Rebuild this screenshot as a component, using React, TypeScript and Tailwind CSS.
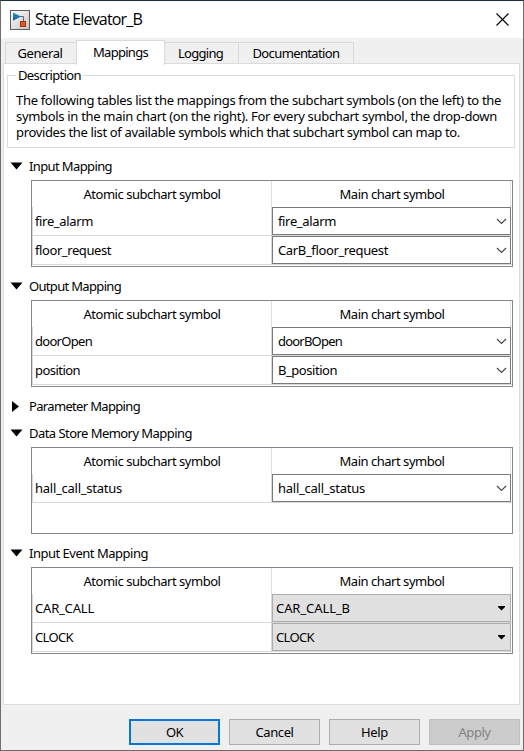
import { useLayoutEffect, useRef } from "react";

/** Single line of text whose tracking is adjusted to fill `w` pixels. */
function Label({ w, children, className = "" }: { w: number; children: string; className?: string }) {
  const ref = useRef<HTMLSpanElement>(null);
  useLayoutEffect(() => {
    const el = ref.current;
    if (!el) return;
    el.style.letterSpacing = "0px";
    const natural = el.getBoundingClientRect().width;
    el.style.letterSpacing = `${(w - natural) / children.length}px`;
  }, [w, children]);
  return (
    <span ref={ref} className={`inline-block self-start whitespace-pre ${className}`}>
      {children}
    </span>
  );
}

type Row = { left: string; lw: number; right: string; rw: number };

function Combo({ text, w, flat }: { text: string; w: number; flat?: boolean }) {
  return (
    <div
      className={`flex h-7 w-[239px] items-center justify-between border ${
        flat ? "border-[#adadad] bg-[#e1e1e1] pr-1 pl-[3px]" : "border-[#7a7a7a] bg-white pr-[3px] pl-[5px]"
      }`}
    >
      <Label w={w} className="mt-[5px]">{text}</Label>
      {flat ? (
        <svg width="9" height="5" viewBox="0 0 9 5">
          <path d="M1 0h7v1L4.5 4.5 1 1z" fill="#000" />
        </svg>
      ) : (
        <svg width="11" height="7" viewBox="0 0 11 7" className="mt-px">
          <path d="M1 1l4.5 4.5L10 1" fill="none" stroke="#444" strokeWidth="1.1" />
        </svg>
      )}
    </div>
  );
}

function MappingTable({ rows, flat }: { rows: Row[]; flat?: boolean }) {
  return (
    <div className="ml-[27px] mt-[3px] h-[87px] w-[482px] border border-[#828790] bg-white">
      <div className="flex h-[26px] w-[479px]">
        <div className="flex w-[240px] justify-center border-r border-[#e0e0e0] pt-[5px] pl-px">
          <Label w={137}>Atomic subchart symbol</Label>
        </div>
        <div className="flex flex-1 justify-center border-r border-[#e5e5e5] pt-[5px] pl-0.5">
          <Label w={105}>Main chart symbol</Label>
        </div>
      </div>
      {rows.map((r) => (
        <div key={r.left} className="flex h-[29px] w-[480px] border-b border-l border-[#d8d8d8]">
          <div className="flex w-[239px] border-r border-[#d8d8d8] pt-1.5 pl-0.5">
            <Label w={r.lw}>{r.left}</Label>
          </div>
          <Combo text={r.right} w={r.rw} flat={flat} />
        </div>
      ))}
    </div>
  );
}

function SectionTitle({ title, w, closed }: { title: string; w: number; closed?: boolean }) {
  return (
    <div className="flex h-5 items-center">
      <div className="flex h-5 w-[25px] items-center pb-[3px] pl-1.5">
        {closed ? (
          <svg width="8" height="11" viewBox="0 0 8 11" className="ml-[2px] mt-0.5">
            <path d="M0 0l7 5.5L0 11z" fill="#000" />
          </svg>
        ) : (
          <svg width="13" height="8" viewBox="0 0 13 8">
            <path d="M0.5 0.5h12L6.5 7.5z" fill="#000" />
          </svg>
        )}
      </div>
      <Label w={w} className="mt-px">{title}</Label>
    </div>
  );
}

function AppIcon() {
  return (
    <svg width="20" height="20" viewBox="0 0 20 20">
      <defs>
        <linearGradient id="face" x1="0" y1="0" x2="1" y2="1">
          <stop offset="0" stopColor="#fff" />
          <stop offset="1" stopColor="#c4c4c4" />
        </linearGradient>
        <linearGradient id="tri" x1="0" y1="0" x2="0" y2="1">
          <stop offset="0" stopColor="#2a93cc" />
          <stop offset="1" stopColor="#1a5f98" />
        </linearGradient>
      </defs>
      <rect x="0.5" y="0.5" width="19" height="19" fill="url(#face)" stroke="#5c5c5c" />
      <path d="M10 6.5h3.5V13" fill="none" stroke="#666" />
      <path d="M3 2.6l8 4-8 4.2z" fill="url(#tri)" />
      <rect x="10.5" y="11.5" width="5" height="5" fill="#e0592a" stroke="#9c3412" />
    </svg>
  );
}

const Button = ({ text, w, kind = "normal" }: { text: string; w: number; kind?: "normal" | "primary" | "disabled" }) => (
  <button
    className={`flex h-[26px] w-[91px] justify-center ${
      kind === "primary"
        ? "border-2 border-[#0078d7] bg-[#e1e1e1] pt-[3px]"
        : kind === "disabled"
          ? "border border-[#bfbfbf] bg-[#cccccc] pt-1 text-[#838383]"
          : "border border-[#adadad] bg-[#e1e1e1] pt-1"
    }`}
  >
    <Label w={w}>{text}</Label>
  </button>
);

export default function App() {
  return (
    <div className="flex h-[751px] w-[524px] flex-col border border-t-[#1d2c40] border-r-[#6d6b6e] border-b-[#6b6b6b] border-l-[#716d6e] bg-[#f0f0f0] font-['Noto_Sans','Open_Sans',sans-serif] text-[13px] leading-4 text-black">
      <header className="flex h-[37px] items-center bg-white pl-[9px]">
        <AppIcon />
        <Label w={107} className="mt-2 ml-[5px] font-['Open_Sans',sans-serif] text-[16px] leading-5">
          State Elevator_B
        </Label>
        <svg width="13" height="13" viewBox="0 0 13 13" className="mr-[14px] mb-px ml-auto">
          <path d="M0.5 0.5l12 12M12.5 0.5l-12 12" stroke="#000" strokeWidth="1.1" />
        </svg>
      </header>

      <nav className="mt-0.5 flex h-6 items-end pl-1">
        <div className="flex h-[22px] w-[71px] justify-center border border-r-0 border-b-0 border-[#d9d9d9] pt-[2px] pr-0.5">
          <Label w={45}>General</Label>
        </div>
        <div className="relative z-10 -mb-px flex h-[25px] w-[89px] justify-center border border-b-0 border-[#d9d9d9] bg-white pt-[3px]">
          <Label w={55}>Mappings</Label>
        </div>
        <div className="flex h-[22px] w-[74px] justify-center border border-l-0 border-b-0 border-[#d9d9d9] pt-[2px] pr-0.5">
          <Label w={45}>Logging</Label>
        </div>
        <div className="flex h-[22px] w-[115px] justify-center border border-l-0 border-b-0 border-[#d9d9d9] pt-[2px]">
          <Label w={87}>Documentation</Label>
        </div>
      </nav>

      <main className="-mt-px ml-0.5 h-[642px] w-[517px] border border-[#dcdcdc] bg-white">
        <fieldset className="mt-[3px] ml-[3px] h-[81px] w-[508px] border border-[#dcdcdc] pl-2">
          <legend className="flex h-4 px-0.5">
            <Label w={63}>Description</Label>
          </legend>
          <div className="mt-[9px] flex flex-col">
            <Label w={485}>The following tables list the mappings from the subchart symbols (on the left) to the</Label>
            <Label w={481}>symbols in the main chart (on the right). For every subchart symbol, the drop-down</Label>
            <Label w={444}>provides the list of available symbols which that subchart symbol can map to.</Label>
          </div>
        </fieldset>

        <section className="mt-[9px]">
          <SectionTitle title="Input Mapping" w={83} />
          <MappingTable
            rows={[
              { left: "fire_alarm", lw: 58, right: "fire_alarm", rw: 58 },
              { left: "floor_request", lw: 76, right: "CarB_floor_request", rw: 110 },
            ]}
          />
        </section>
        <section className="mt-2.5">
          <SectionTitle title="Output Mapping" w={92} />
          <MappingTable
            rows={[
              { left: "doorOpen", lw: 57, right: "doorBOpen", rw: 64 },
              { left: "position", lw: 45, right: "B_position", rw: 59 },
            ]}
          />
        </section>
        <section className="mt-2.5">
          <SectionTitle title="Parameter Mapping" w={111} closed />
        </section>
        <section className="mt-[7px]">
          <SectionTitle title="Data Store Memory Mapping" w={163} />
          <MappingTable rows={[{ left: "hall_call_status", lw: 87, right: "hall_call_status", rw: 87 }]} />
        </section>
        <section className="mt-2.5">
          <SectionTitle title="Input Event Mapping" w={119} />
          <MappingTable
            flat
            rows={[
              { left: "CAR_CALL", lw: 59, right: "CAR_CALL_B", rw: 74 },
              { left: "CLOCK", lw: 38, right: "CLOCK", rw: 38 },
            ]}
          />
        </section>
      </main>

      <footer className="mt-3.5 flex gap-[9px] pl-32">
        <Button text="OK" w={17} kind="primary" />
        <Button text="Cancel" w={38} />
        <Button text="Help" w={27} />
        <Button text="Apply" w={32} kind="disabled" />
      </footer>
    </div>
  );
}
